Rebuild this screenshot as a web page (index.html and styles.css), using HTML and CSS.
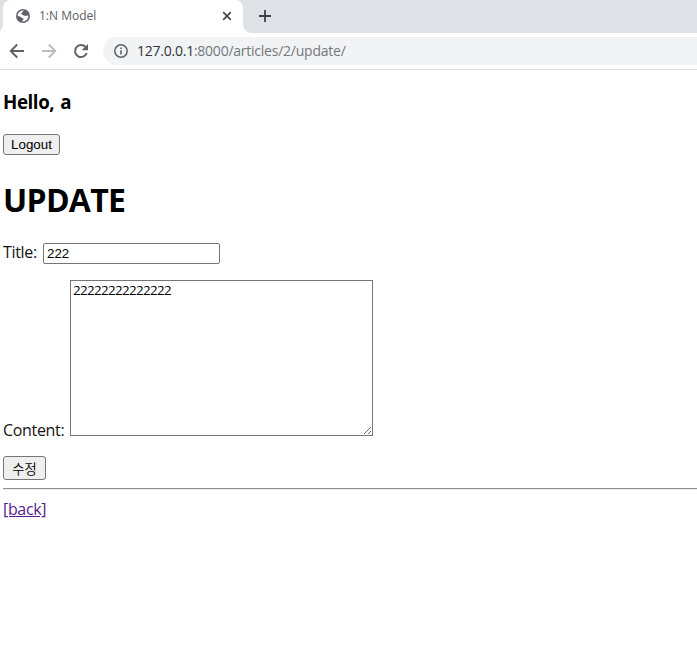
FILE: index.html
```html
<!DOCTYPE html>
<html lang="ko">
<head>
<meta charset="utf-8">
<title>1:N Model</title>
<link rel="stylesheet" href="styles.css">
</head>
<body>
<header class="browser">
  <div class="tabs">
    <div class="tab">
      <svg class="globe" width="14" height="14" viewBox="0 0 14 14"><circle cx="7" cy="7" r="7" fill="#5f6368"/><path d="M8.3 1.6C6.6 2 6.8 3.2 5.7 3.9c-1 .7-.5 1.7.7 1.8 1.1.1 1 .9 2.1 1 1.4.1 2.1.2 3.9-.2A5.5 5.5 0 0 1 6 12.4c.3-1 1.6-1 1.5-2.2-.1-1.1-1.3-.9-2-1.6C4.7 7.7 3.3 7.3 1.5 7A5.5 5.5 0 0 1 8.3 1.6z" fill="#fff"/></svg>
      <span class="tab-title">1:N Model</span>
      <svg class="close" width="10" height="10" viewBox="0 0 10 10"><path d="M1.2 1.2l7.6 7.6M8.8 1.2L1.2 8.8" stroke="#45494d" stroke-width="1.7"/></svg>
    </div>
    <svg class="plus" width="12" height="12" viewBox="0 0 12 12"><path d="M6 0v12M0 6h12" stroke="#3c4043" stroke-width="1.8"/></svg>
  </div>
  <div class="toolbar">
    <svg class="nav" width="16" height="16" viewBox="0 0 16 16"><path d="M15 8H2M8.2 1.5L1.7 8l6.5 6.5" fill="none" stroke="#5f6368" stroke-width="1.9"/></svg>
    <svg class="nav" width="16" height="16" viewBox="0 0 16 16"><path d="M1 8h13M7.8 1.5L14.3 8l-6.5 6.5" fill="none" stroke="#babcbe" stroke-width="1.9"/></svg>
    <svg class="nav" width="16" height="16" viewBox="0 0 16 16"><path d="M13.7 10A6 6 0 1 1 12.5 4" fill="none" stroke="#5f6368" stroke-width="2"/><path d="M15 1v6.3H8.7z" fill="#5f6368"/></svg>
    <div class="address">
      <svg width="14" height="14" viewBox="0 0 14 14"><circle cx="7" cy="7" r="6.2" fill="none" stroke="#5f6368" stroke-width="1.5"/><path d="M7 6.2v4.2M7 3.4v1.6" stroke="#5f6368" stroke-width="1.6"/></svg>
      <span class="url"><span class="host">127.0.0.1</span>:8000/articles/2/update/</span>
    </div>
  </div>
</header>
<main class="page">
  <h3>Hello, a</h3>
  <button class="logout">Logout</button>
  <h1>UPDATE</h1>
  <form>
    <div class="row title-row"><label for="title">Title:</label><input id="title" type="text" value="222"></div>
    <div class="row content-row"><label for="content">Content:</label><textarea id="content" spellcheck="false">22222222222222</textarea></div>
    <button class="submit" type="button">수정</button>
  </form>
  <hr>
  <a class="back" href="#">[back]</a>
</main>
</body>
</html>
```
FILE: styles.css
```css
* { box-sizing: border-box; }
body { margin: 0; height: 656px; overflow: hidden; background: #fff; color: #000; font: 16px/22px "Open Sans", "Noto Sans CJK KR", sans-serif; }
svg { display: block; flex: none; }
.browser { height: 70px; border-bottom: 1px solid #dadce0; }
.tabs { height: 33px; display: flex; background: #dee1e6; padding-left: 3px; }
.tab { width: 240px; height: 33px; display: flex; align-items: center; padding: 0 11px 1px 13px; background: #fff; border-radius: 8px 8px 0 0; position: relative; }
.tab::before, .tab::after { content: ""; position: absolute; bottom: 0; width: 8px; height: 8px; }
.tab::before { left: -8px; background: radial-gradient(circle at 0 0, transparent 7.5px, #fff 8px); }
.tab::after { right: -8px; background: radial-gradient(circle at 100% 0, transparent 7.5px, #fff 8px); }
.tab-title { margin-left: 9px; font-size: 12px; color: #5a5e62; white-space: nowrap; }
.close { margin-left: auto; }
.plus { margin: 10px 0 0 16px; }
.toolbar { height: 36px; display: flex; align-items: center; padding-left: 9px; }
.nav { margin-right: 16px; }
.address { flex: 1; height: 28px; margin-left: -2px; padding-left: 11px; display: flex; align-items: center; background: #f1f3f4; border-radius: 14px 0 0 14px; }
.url { margin-left: 9px; font-size: 14px; letter-spacing: -0.24px; color: #74787c; white-space: nowrap; }
.host { color: #303337; }
.page { padding: 19px 0 0 3px; }
h3 { margin: 0; height: 45px; font-size: 18.72px; line-height: 26px; font-weight: 700; letter-spacing: -0.4px; word-spacing: 1.5px; }
h1 { margin: 0; height: 63px; font-size: 32px; line-height: 40px; font-weight: 700; letter-spacing: -0.7px; }
button { display: block; margin: 0; padding: 0; border: 1px solid #767676; border-radius: 3px; background: #efefef; color: #000; }
.logout { width: 57px; height: 21px; margin-bottom: 25px; font: 13.333px/17px "Liberation Sans", sans-serif; }
.row { display: flex; }
.row label { letter-spacing: -0.33px; color: #141414; }
.title-row { height: 37px; }
.title-row label { width: 40px; line-height: 19px; }
input { width: 177px; height: 21px; padding: 1px 3px; border: 1px solid #767676; border-radius: 2px; font: 13.333px "Liberation Sans", sans-serif; }
.content-row { height: 176px; }
.content-row label { width: 67px; padding-top: 139px; }
textarea { width: 303px; height: 156px; margin: 0; padding: 1px 2px; border: 1px solid #767676; resize: both; letter-spacing: -0.62px; font: 13.333px/16px "Open Sans", sans-serif; }
.submit { width: 43px; height: 24px; padding-top: 1px; font: 350 13.333px/20px "Noto Sans CJK KR", sans-serif; }
hr { height: 2px; margin: 8px 0; border: 0; border-top: 1px solid #8f8f8f; border-bottom: 1px solid #ececec; }
.back { display: inline-block; color: #551a8b; letter-spacing: -0.33px; }
```
